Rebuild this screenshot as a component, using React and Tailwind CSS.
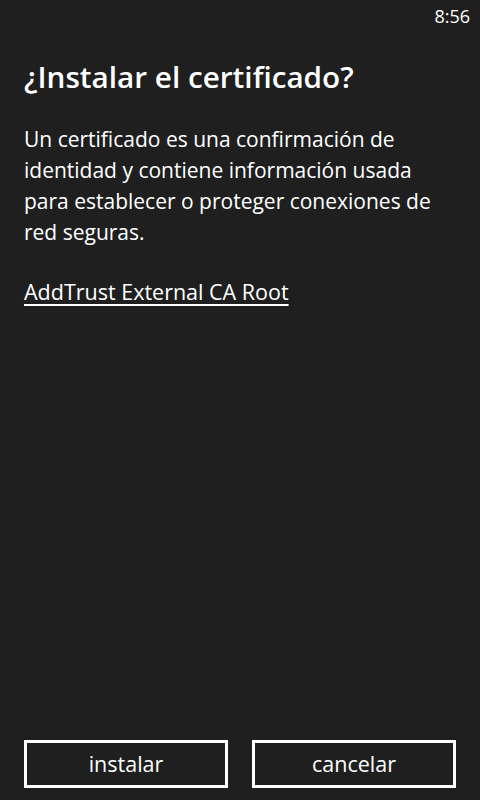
const App = () => {
    return (
        <div className="flex h-[800px] w-[480px] flex-col bg-[#1f1f1f] text-white font-['Open_Sans',sans-serif]">
            <div className="flex h-8 items-center justify-end px-[10px] text-[18px]">8:56</div>

            <div className="flex-1 px-6">
                <h1 className="mt-[27px] text-[29.7px] font-semibold leading-[36px]">¿Instalar el certificado?</h1>
                <p className="mt-[29px] text-[21px] leading-[31px]">
                    Un certificado es una confirmación de identidad y contiene información usada para establecer o proteger conexiones de red seguras.
                </p>
                <a className="mt-[30px] inline-block text-[21.5px] leading-[28px] underline underline-offset-4">AddTrust External CA Root</a>
            </div>

            <div className="flex gap-6 px-6 pb-3">
                <button className="h-12 flex-1 border-[3px] border-white text-[21.5px]">instalar</button>
                <button className="h-12 flex-1 border-[3px] border-white text-[21.5px]">cancelar</button>
            </div>
        </div>
    );
};

export default App;
